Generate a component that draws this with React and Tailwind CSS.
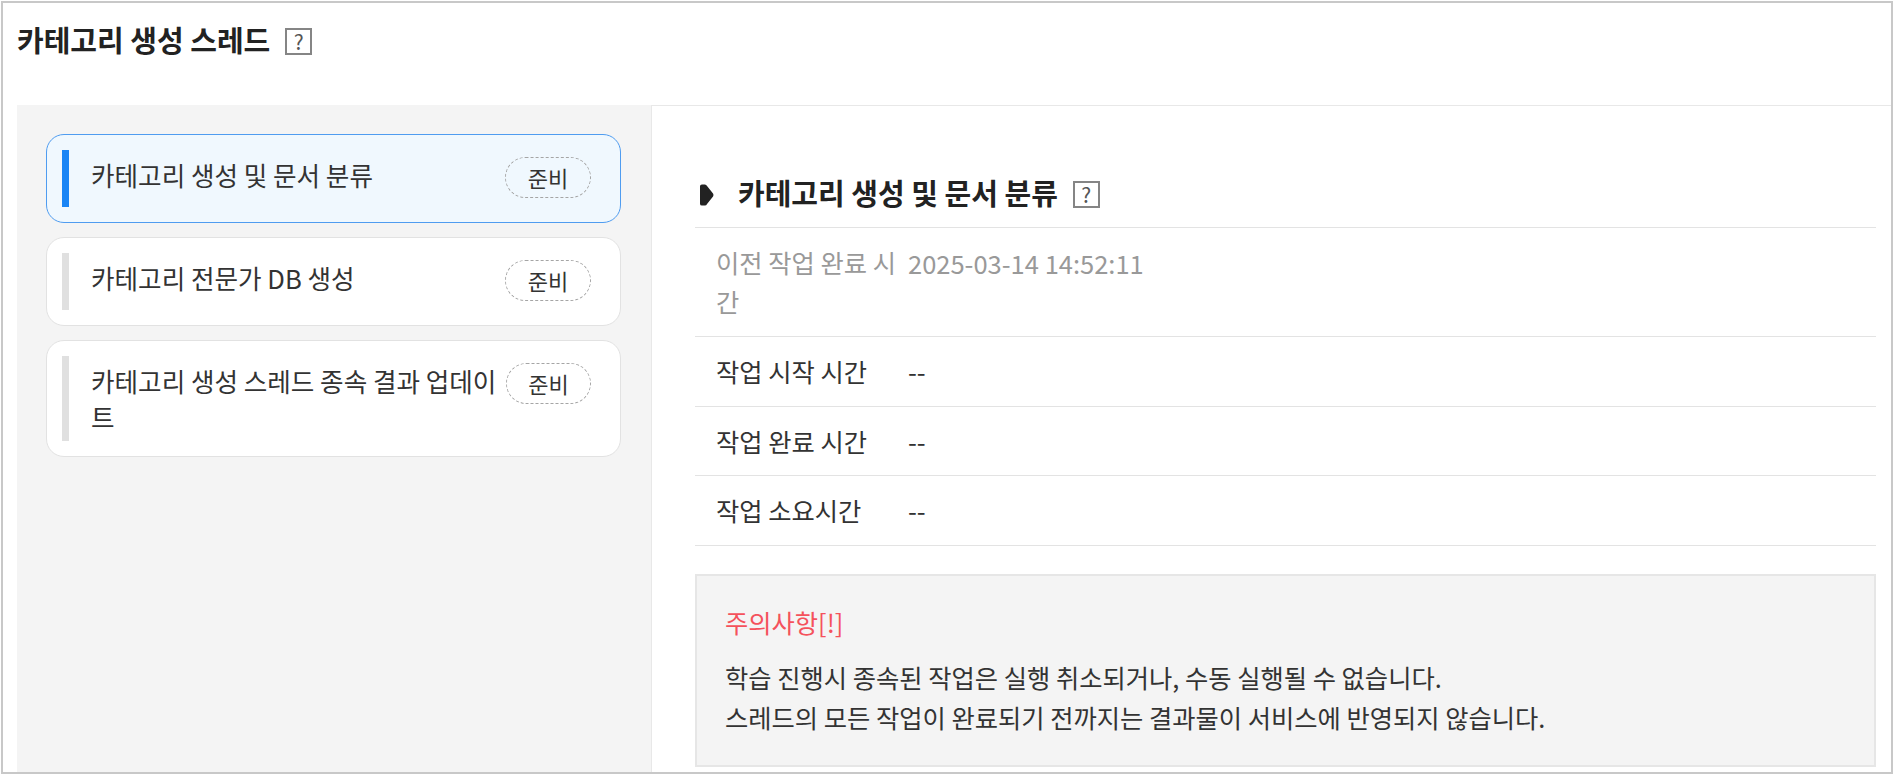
const font = { fontFamily: '"Noto Sans CJK KR", "Noto Sans", sans-serif' };

function Help({ className = '' }) {
  return (
    <span className={`flex h-[27px] w-[27px] shrink-0 items-center justify-center border-2 border-[#858585] bg-white text-[21px] leading-none text-[#555] ${className}`}>
      ?
    </span>
  );
}

function Task({ title, active, badgeWidth = 'w-[86px]' }) {
  return (
    <div className={`flex rounded-[18px] border px-[15px] py-[15px] ${active ? 'border-[#4f9cf0] bg-[#f0f8fe]' : 'border-[#e2e2e2] bg-white'}`}>
      <div className={`flex min-h-[57px] flex-1 items-start border-l-[7px] pt-[7px] pb-[6px] pl-[22px] pr-[14px] ${active ? 'border-[#1a85f5]' : 'border-[#e0e0e0]'}`}>
        <div className="min-w-0 flex-1 text-[25.6px] leading-[36px] text-[#333]">{title}</div>
        <span className={`flex h-[41px] shrink-0 items-center justify-center rounded-full border border-dashed border-[#a5a5a5] text-[22px] text-[#333] ${badgeWidth}`}>
          준비
        </span>
      </div>
    </div>
  );
}

function Row({ label, value, muted }) {
  return (
    <div className={`flex border-b border-[#e3e3e3] py-[15px] pl-[21px] text-[25.3px] ${muted ? 'leading-[39px] text-[#999]' : 'leading-[38.6px] text-[#333]'}`}>
      <div className="w-[192px] shrink-0 pr-[10px]">{label}</div>
      <div className="text-[25.5px]">{value}</div>
    </div>
  );
}

export default function App() {
  return (
    <div style={font} className="h-[775px] w-full bg-white p-px">
      <div className="flex h-full flex-col border-2 border-[#c8c8c8] bg-white">
        <div className="flex h-[102px] shrink-0 items-start gap-[15px] pt-[14px] pl-[14px]">
          <h1 className="text-[29px] leading-[44px] font-bold text-[#222]">카테고리 생성 스레드</h1>
          <Help className="mt-[11px]" />
        </div>
        <div className="flex min-h-0 flex-1 pl-[14px]">
          <div className="flex w-[634px] shrink-0 flex-col gap-[14px] bg-[#f4f4f4] pt-[29px] pr-[30px] pl-[29px]">
            <Task title="카테고리 생성 및 문서 분류" active />
            <Task title="카테고리 전문가 DB 생성" />
            <Task title="카테고리 생성 스레드 종속 결과 업데이트" badgeWidth="w-[85px]" />
          </div>
          <div className="flex-1 border-t border-l border-[#e8e8e8] pt-[62px] pr-[15px] pl-[43px]">
            <div className="flex h-[60px] items-center border-b border-[#e3e3e3] pb-[9px]">
              <svg viewBox="0 0 14.5 22" className="mt-[4px] ml-[5px] h-[22px] w-[14px] shrink-0" fill="#222">
                <path d="M2 0 L5 0 Q6.5 0 7.5 2 L13.5 9.5 Q14.5 11 13.5 12.5 L7.5 20 Q6.5 22 5 22 L2 22 Q0 22 0 20 L0 2 Q0 0 2 0 Z" />
              </svg>
              <h2 className="ml-[24px] text-[29px] font-bold text-[#222]">카테고리 생성 및 문서 분류</h2>
              <Help className="mt-[3px] ml-[15px]" />
            </div>
            <Row label="이전 작업 완료 시간" value="2025-03-14 14:52:11" muted />
            <Row label="작업 시작 시간" value="--" />
            <Row label="작업 완료 시간" value="--" />
            <Row label="작업 소요시간" value="--" />
            <div className="mt-[28px] h-[193px] border-2 border-[#e6e6e6] bg-[#f4f4f4] px-[28px] pt-[26px]">
              <p className="text-[25.3px] leading-[40px] text-[#f4525c]">주의사항[!]</p>
              <div className="mt-[15px] text-[25.3px] leading-[40px] text-[#333]">
                <p>학습 진행시 종속된 작업은 실행 취소되거나, 수동 실행될 수 없습니다.</p>
                <p>스레드의 모든 작업이 완료되기 전까지는 결과물이 서비스에 반영되지 않습니다.</p>
              </div>
            </div>
          </div>
        </div>
      </div>
    </div>
  );
}
